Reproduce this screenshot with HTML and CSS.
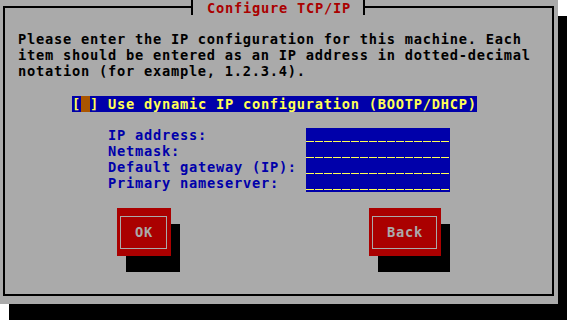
FILE: index.html
```html
<!DOCTYPE html>
<html lang="en">
<head>
  <meta charset="UTF-8">
  <meta name="viewport" content="width=device-width, initial-scale=1.0">
  <link rel="stylesheet" href="styles.css">
  <title>Configure TCP/IP</title>
</head>
<body>

  <div class="screen">
    <div class="dialog">
      <div class="frame"></div>
      <div class="title">Configure TCP/IP</div>

      <p class="intro">Please enter the IP configuration for this machine. Each<br>item should be entered as an IP address in dotted-decimal<br>notation (for example, 1.2.3.4).</p>

      <div class="dhcp">[<span class="cursor"> </span>] Use dynamic IP configuration (BOOTP/DHCP)</div>

      <div class="labels">IP address:<br>Netmask:<br>Default gateway (IP):<br>Primary nameserver:</div>
      <div class="fields">
        <span class="entry"></span>
        <span class="entry"></span>
        <span class="entry"></span>
        <span class="entry"></span>
      </div>

      <button class="btn btn-ok"><span class="btn-face">OK</span></button>
      <button class="btn btn-back"><span class="btn-face">Back</span></button>
    </div>
  </div>

</body>
</html>
```

FILE: styles.css
```css
body{
  margin:0;
  background:#fff;
  font:bold 13.7px/16px "DejaVu Sans Mono", "Liberation Mono", monospace;
  letter-spacing:0.753px; /* 9px cells */
}

.screen{
  width:567px; height:320px;
}

/* text-mode window: 62 x 19 cells of 9x16 */
.dialog{
  width:558px; height:304px;
  background:#aaa;
  box-shadow:9px 16px 0 #000;
  display:grid;
  grid-template-columns:repeat(62, 9px);
  grid-template-rows:repeat(19, 16px);
  color:#000;
}

.frame{
  grid-column:1 / -1; grid-row:1 / -1;
  margin:6px 4px 8px 3px;
  border:2px solid #000;
}

.title{
  grid-column:22 / span 20; grid-row:1;
  align-self:start;
  height:15px;
  margin:0 4px 0 2px;
  padding-left:14px;
  background:#aaa;
  border-left:2px solid #000;
  border-right:2px solid #000;
  color:#aa0000;
  white-space:nowrap;
}

.intro{
  grid-column:3 / span 58; grid-row:3 / span 3;
  margin:-1px 0 0;
  white-space:nowrap;
}

.dhcp{
  grid-column:9 / span 45; grid-row:7;
  background:#0000aa;
  color:#ffff55;
  white-space:pre;
}
.cursor{
  display:inline-block;
  width:9px;
  letter-spacing:0;
  background:#aa5500;
}

.labels{
  grid-column:13 / span 21; grid-row:9 / span 4;
  margin-top:-1px;
  color:#0000aa;
  white-space:nowrap;
}

.fields{
  grid-column:35 / span 16; grid-row:9 / span 4;
  display:flex; flex-direction:column;
}
.entry{
  height:16px;
  background:
    repeating-linear-gradient(to right, transparent 0 8px, #0000aa 8px 9px),
    linear-gradient(to bottom, transparent 0 13px, #ffff55 13px 14px, transparent 14px),
    #0000aa;
}

.btn{
  grid-row:14 / span 3;
  margin:0; padding:0; border:0;
  appearance:none;
  background:#aa0000;
  box-shadow:9px 16px 0 #000;
  font:inherit;
  letter-spacing:inherit;
  color:#aaa;
  text-align:left;
  display:block;
}
.btn-ok{ grid-column:14 / span 6; }
.btn-back{ grid-column:42 / span 8; }

.btn-face{
  display:block;
  box-sizing:border-box;
  height:33px;
  margin:0 4px 0 3px;
  padding:7px 0 0 14px;
  border:1px solid #aaa;
  line-height:16px;
}
```
